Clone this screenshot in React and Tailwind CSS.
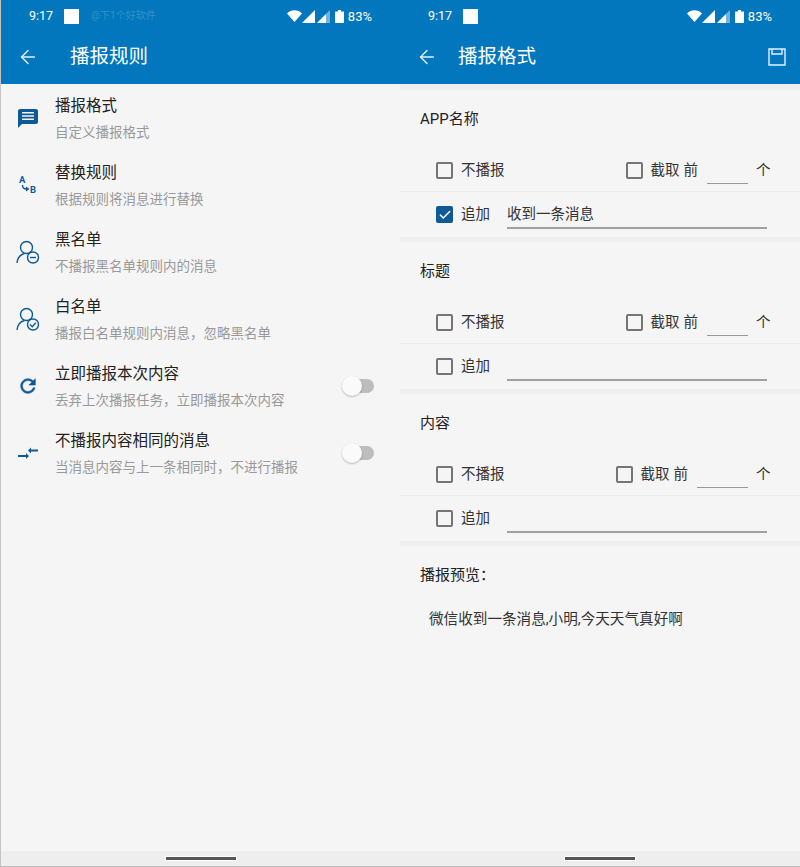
import React from 'react';
import { ArrowLeft, Check } from 'lucide-react';

const StatusBar = ({ watermark }) => (
  <div className="h-[28px] pt-[4px] flex items-center text-white">
    <span className="ml-[28px] text-[12.500px] leading-none">9:17</span>
    <div className="ml-[11px] w-[15px] h-[15px] bg-white shrink-0" />
    {watermark && <span className="ml-[12px] text-[10px] leading-none text-white/20">@下1个好软件</span>}
    <div className="ml-auto mr-[28px] flex items-center">
      <svg width="15" height="12" viewBox="0 0 15 12"><path d="M0 3.500C4-.8 11-.8 15 3.500L7.500 12z" fill="#fff" /></svg>
      <svg width="13" height="13" viewBox="0 0 13 13"><path d="M13 0v13H0z" fill="#fff" /></svg>
      <svg width="13" height="13" viewBox="0 0 13 13" className="ml-[2px]"><path d="M13 0v13H0z" fill="#fff" fillOpacity="0.45" /><path d="M9 4v9H0z" fill="#fff" /></svg>
      <svg width="9" height="13" viewBox="0 0 9 13" className="ml-[5px]"><path d="M3 0h3v1.500h2c.6 0 1 .4 1 1V12c0 .6-.4 1-1 1H1c-.6 0-1-.4-1-1V2.500c0-.6.4-1 1-1h2z" fill="#fff" /></svg>
      <span className="ml-[4px] text-[13px] leading-none">83%</span>
    </div>
  </div>
);

const AppBar = ({ title, titleClass, watermark, action }) => (
  <header className="h-[84px] bg-[#0277bd] text-white shrink-0">
    <StatusBar watermark={watermark} />
    <div className="h-[56px] pt-[2px] flex items-center">
      <ArrowLeft size={22} strokeWidth={1.5} className="ml-[16px]" color="#e3f2fb" />
      <h1 className={`${titleClass} text-[19.500px] font-normal leading-none`}>{title}</h1>
      {action}
    </div>
  </header>
);

const iconColor = '#0d5a96';

const MessageIcon = () => (
  <svg width="24" height="24" viewBox="0 0 24 24" fill={iconColor}>
    <path d="M20 3H4c-1 0-2 .9-2 2l0 17 4-4h14c1.100 0 2-.9 2-2V5c0-1.100-.9-2-2-2zm-2 11H6v-1.600h12zm0-3.200H6V9.200h12zm0-3.200H6V6h12z" />
  </svg>
);

const SwapIcon = () => (
  <svg width="24" height="24" viewBox="0 0 24 24">
    <text x="3" y="10" fontSize="9.500" fontWeight="700" fill={iconColor} fontFamily="Roboto, sans-serif">A</text>
    <text x="14" y="20" fontSize="9.500" fontWeight="700" fill={iconColor} fontFamily="Roboto, sans-serif">B</text>
    <path d="M6.500 12c0 2.500 1 4 4 4" fill="none" stroke={iconColor} strokeWidth="1.400" />
    <path d="M10 13.500l3.500 2.500-3.500 2.500z" fill={iconColor} />
  </svg>
);

const PersonBadge = ({ check }) => (
  <svg width="26" height="26" viewBox="0 0 26 26" fill="none" stroke={iconColor} strokeWidth="1.400">
    <circle cx="11.500" cy="8.500" r="6" />
    <path d="M2 24c.5-5 3.500-8.500 7.500-9.500" />
    <circle cx="18" cy="18.500" r="5.500" />
    {check ? <path d="M15 18.500l2.300 2.300 3.500-4" /> : <path d="M15 18.500h6" />}
  </svg>
);

const RefreshIcon = () => (
  <svg width="22" height="22" viewBox="0 0 24 24" fill={iconColor} stroke={iconColor} strokeWidth="0.6">
    <path d="M17.650 6.350A7.958 7.958 0 0012 4c-4.420 0-7.990 3.580-7.990 8s3.570 8 7.990 8c3.730 0 6.840-2.550 7.730-6h-2.080A5.990 5.990 0 0112 18c-3.310 0-6-2.690-6-6s2.690-6 6-6c1.660 0 3.140.69 4.220 1.780L13 11h7V4l-2.350 2.350z" />
  </svg>
);

const CompareIcon = () => (
  <svg width="22" height="22" viewBox="0 0 22 22" fill={iconColor}>
    <path d="M1 13h8v-2l3 3-3 3v-2H1z" />
    <path d="M21 7.500h-7v-2l-3 3 3 3v-2h7z" />
  </svg>
);

const Toggle = () => (
  <div className="relative w-[32px] h-[22px] mr-[26px] flex items-center justify-end">
    <div className="w-[23px] h-[14px] rounded-full bg-[#bdbdbd]" />
    <div className="absolute left-0 top-[1px] w-[20px] h-[20px] rounded-full bg-[#fafafa] shadow-[0_1px_2px_rgba(0,0,0,0.25)]" />
  </div>
);

const rules = [
  { icon: <MessageIcon />, title: '播报格式', sub: '自定义播报格式' },
  { icon: <SwapIcon />, title: '替换规则', sub: '根据规则将消息进行替换' },
  { icon: <PersonBadge />, title: '黑名单', sub: '不播报黑名单规则内的消息' },
  { icon: <PersonBadge check />, title: '白名单', sub: '播报白名单规则内消息，忽略黑名单' },
  { icon: <RefreshIcon />, title: '立即播报本次内容', sub: '丢弃上次播报任务，立即播报本次内容', toggle: true },
  { icon: <CompareIcon />, title: '不播报内容相同的消息', sub: '当消息内容与上一条相同时，不进行播报', toggle: true },
];

const RuleRow = ({ icon, title, sub, toggle }) => (
  <div className="h-[67px] flex items-center">
    <div className="w-[54px] flex justify-center pr-[1px] shrink-0">{icon}</div>
    <div className="flex-1 pt-[3px]">
      <div className="text-[15.500px] leading-[20px] text-[#222]">{title}</div>
      <div className="mt-[6px] text-[13.500px] leading-[20px] text-[#999]">{sub}</div>
    </div>
    {toggle && <Toggle />}
  </div>
);

const Box = ({ checked }) =>
  checked ? (
    <div className="w-[17px] h-[17px] shrink-0 rounded-[2px] bg-[#0d5a96] flex items-center justify-center">
      <Check size={14} strokeWidth={2.6} color="#fff" />
    </div>
  ) : (
    <div className="w-[17px] h-[17px] shrink-0 rounded-[2px] border-2 border-[#757575]" />
  );

const Section = ({ title, text, checked, cutClass, inputClass }) => (
  <section>
    <div className="h-[56px] pt-[2px] flex items-center pl-[20px] text-[15px] text-[#222]">{title}</div>
    <div className="h-[46px] pt-[4px] flex items-center pl-[36px] border-b border-[#eeeeee] text-[14.500px] text-[#333] whitespace-nowrap">
      <Box />
      <span className="ml-[8px]">不播报</span>
      <div className={`${cutClass} flex items-center`}>
        <Box />
        <span className="ml-[8px]">截取</span>
        <span className="ml-[4px]">前</span>
      </div>
      <div className={`${inputClass} h-[26px] border-b border-[#999] ml-[9px] shrink-0`} />
      <span className="ml-[8px]">个</span>
    </div>
    <div className="h-[45px] flex items-center pl-[36px] text-[14.500px] text-[#333]">
      <Box checked={checked} />
      <span className="ml-[8px]">追加</span>
      <div className="ml-[17px] w-[260px] h-[29px] border-b-2 border-[#a0a0a0] text-[14.500px] leading-[30px]">{text}</div>
    </div>
    <div className="h-[5px] bg-[#eeeeee]" />
  </section>
);

const NavBar = () => (
  <div className="mt-auto h-[15px] bg-[#eeeeee] flex items-center justify-center shrink-0">
    <div className="w-[70px] h-[3px] bg-[#555] shadow-[0_0_0_1px_#fff]" />
  </div>
);

const SaveIcon = () => (
  <svg width="18" height="18" viewBox="0 0 18 18" fill="none" stroke="#e3f2fb" strokeWidth="1.400" className="ml-auto mr-[14px] mb-[1px]">
    <path d="M1 1h16v16H1z" />
    <path d="M4 1v5h10V1" />
  </svg>
);

export default function App() {
  return (
    <div className="w-[800px] h-[867px] flex bg-[#f5f5f5] border-b border-[#bdbdbd]" style={{ fontFamily: 'Roboto, "Noto Sans CJK SC", sans-serif' }}>
      <main className="w-[400px] flex flex-col border-l border-[#c4c4c4]">
        <AppBar title="播报规则" titleClass="ml-[31px]" watermark />
        <div>
          {rules.map((r) => (
            <RuleRow key={r.title} {...r} />
          ))}
        </div>
        <NavBar />
      </main>
      <main className="w-[400px] flex flex-col">
        <AppBar title="播报格式" titleClass="ml-[20px]" action={<SaveIcon />} />
        <div className="h-[6px] bg-[#eeeeee] shrink-0" />
        <Section title="APP名称" text="收到一条消息" checked cutClass="ml-[121px]" inputClass="w-[41px]" />
        <Section title="标题" cutClass="ml-[121px]" inputClass="w-[41px]" />
        <Section title="内容" cutClass="ml-[111px]" inputClass="w-[51px]" />
        <div className="pl-[20px] pt-[19px] text-[15px] leading-[20px] text-[#222]">播报预览：</div>
        <div className="pl-[29px] pt-[24px] text-[14.600px] leading-[20px] text-[#333]">微信收到一条消息,小明,今天天气真好啊</div>
        <NavBar />
      </main>
    </div>
  );
}
